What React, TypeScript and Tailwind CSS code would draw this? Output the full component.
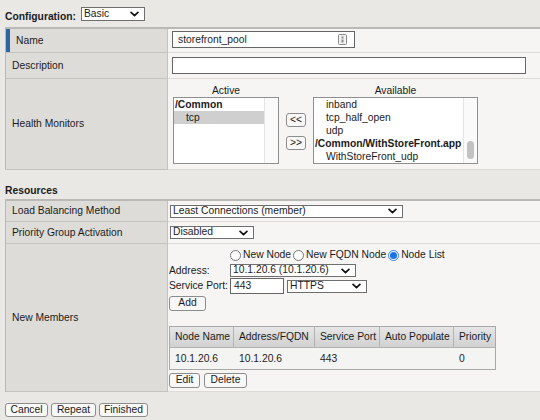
import React from "react";

const Chevron = () => (
  <svg viewBox="0 0 10 6" className="w-[9px] h-[6px] shrink-0">
    <path
      d="M1.2 1.2L5 4.8L8.8 1.2"
      fill="none"
      stroke="#111"
      strokeWidth="1.9"
      strokeLinecap="round"
      strokeLinejoin="round"
    />
  </svg>
);

const Select = ({ text, className }: { text: string; className: string }) => (
  <div
    className={`flex items-center justify-between bg-white border border-[#6f6f6f] pl-[2px] pr-[5px] leading-none ${className}`}
  >
    <span>{text}</span>
    <Chevron />
  </div>
);

const Btn = ({ label, className }: { label: string; className: string }) => (
  <button
    type="button"
    className={`flex items-center justify-center bg-[#f8f8f8] border border-[#8c8c8c] rounded-[3px] leading-none ${className}`}
  >
    {label}
  </button>
);

const Radio = ({ checked, label }: { checked?: boolean; label: string }) => (
  <label className="flex items-center">
    {checked ? (
      <span className="w-[11px] h-[11px] rounded-full border border-[#2f7df3] bg-white p-[1px]">
        <span className="block w-full h-full rounded-full bg-[#1a73e8]" />
      </span>
    ) : (
      <span className="w-[11px] h-[11px] rounded-full border border-[#767676] bg-white" />
    )}
    <span className="ml-[2px] mr-[2px]">{label}</span>
  </label>
);

const KeyIcon = () => (
  <svg viewBox="0 0 9 11" className="w-[9px] h-[11px]">
    <rect x="0.5" y="0.5" width="8" height="10" rx="1" fill="#f2f2f2" stroke="#8a8a8a" />
    <rect x="3.5" y="2.5" width="2" height="2" fill="#8a8a8a" />
    <rect x="3.5" y="5.5" width="2" height="3" fill="#8a8a8a" />
  </svg>
);

const label = "bg-[#dedcd8] border-r border-b border-[#c4c3bf] flex items-center";
const value = "bg-[#f6f5f3] border-b border-[#dcdbd8]";

const headCell =
  "h-full flex items-center pl-[5px] border-r border-[#b3b3b3] bg-linear-to-b from-[#e6e6e6] to-[#d1d1d1]";

export default function App() {
  return (
    <div className="w-[540px] h-[420px] overflow-hidden bg-[#e9e8e5] text-[10.3px] text-[#1b1b1b] font-['Liberation_Sans',Arial,Helvetica,sans-serif]">
      {/* top */}
      <div className="h-[27px] flex items-start pl-[5px] pt-[7px]">
        <span className="font-bold mt-[3px] leading-[13px]">Configuration:</span>
        <Select text="Basic" className="ml-[5px] w-[64px] h-[14px]" />
      </div>

      {/* general table */}
      <div className="ml-[5px] w-[535px] border-t-2 border-l border-[#bab9b5]">
        <div className="grid grid-cols-[162px_1fr] h-[24px]">
          <div className={label}>
            <div className="w-[4px] h-full bg-[#2e65a3]" />
            <span className="pl-[6px]">Name</span>
          </div>
          <div className={`${value} pl-[4px] pt-[2px]`}>
            <div className="w-[183px] h-[17px] border border-[#666] bg-white flex items-center justify-between pl-[5px] pr-[7px]">
              <span>storefront_pool</span>
              <KeyIcon />
            </div>
          </div>
        </div>
        <div className="grid grid-cols-[162px_1fr] h-[26px]">
          <div className={`${label} pl-[6px]`}>Description</div>
          <div className={`${value} pl-[4px] flex items-center`}>
            <div className="w-[354px] h-[17px] border border-[#666] bg-white" />
          </div>
        </div>
        <div className="grid grid-cols-[162px_1fr] h-[91px]">
          <div className={`${label} pl-[6px]`}>Health Monitors</div>
          <div className={`${value} flex pl-[5px] pt-[5px]`}>
            <div className="w-[106px] flex flex-col">
              <div className="h-[13px] leading-[13px] text-center">Active</div>
              <div className="h-[67px] border border-[#8f8f8f] bg-white flex">
                <div className="flex-1 flex flex-col">
                  <div className="h-[13px] leading-[13px] pl-[1px] font-bold">/Common</div>
                  <div className="h-[13px] leading-[13px] pl-[12px] bg-[#cfcfcf]">tcp</div>
                </div>
                <div className="w-[14px] border-l border-[#e4e4e4] bg-[#fafafa]" />
              </div>
            </div>
            <div className="w-[20px] ml-[7px] pt-[29px] flex flex-col gap-[9px]">
              <Btn label="<<" className="w-[20px] h-[14px]" />
              <Btn label=">>" className="w-[20px] h-[14px]" />
            </div>
            <div className="w-[165px] ml-[7px] flex flex-col">
              <div className="h-[13px] leading-[13px] text-center">Available</div>
              <div className="h-[67px] border border-[#8f8f8f] bg-white flex overflow-hidden">
                <div className="flex-1 flex flex-col whitespace-nowrap">
                  <div className="h-[13px] leading-[13px] pl-[12px]">inband</div>
                  <div className="h-[13px] leading-[13px] pl-[12px]">tcp_half_open</div>
                  <div className="h-[13px] leading-[13px] pl-[12px]">udp</div>
                  <div className="h-[13px] leading-[13px] pl-[1px] font-bold">/Common/WithStoreFront.app</div>
                  <div className="h-[13px] leading-[13px] pl-[12px]">WithStoreFront_udp</div>
                </div>
                <div className="w-[14px] border-l border-[#e4e4e4] bg-[#fafafa] pt-[43px] pl-[3px]">
                  <div className="w-[7px] h-[18px] rounded-full bg-[#c2c2c2]" />
                </div>
              </div>
            </div>
          </div>
        </div>
      </div>

      {/* resources */}
      <div className="h-[29px] pt-[14px] pl-[5px] font-bold leading-[13px]">Resources</div>

      <div className="ml-[5px] w-[535px] border-t-2 border-l border-[#bab9b5]">
        <div className="grid grid-cols-[162px_1fr] h-[21px]">
          <div className={`${label} pl-[6px]`}>Load Balancing Method</div>
          <div className={`${value} pl-[2px] flex items-center`}>
            <Select text="Least Connections (member)" className="w-[233px] h-[13px]" />
          </div>
        </div>
        <div className="grid grid-cols-[162px_1fr] h-[22px]">
          <div className={`${label} pl-[6px]`}>Priority Group Activation</div>
          <div className={`${value} pl-[2px] flex items-center`}>
            <Select text="Disabled" className="w-[84px] h-[13px]" />
          </div>
        </div>
        <div className="grid grid-cols-[162px_1fr] h-[148px]">
          <div className={`${label} pl-[6px]`}>New Members</div>
          <div className={`${value} pl-[1px] pt-[4px] flex flex-col items-start`}>
            <div className="h-[14px] flex items-center pl-[61px]">
              <Radio label="New Node" />
              <Radio label="New FQDN Node" />
              <Radio checked label="Node List" />
            </div>
            <div className="mt-[2px] h-[13px] flex items-center">
              <span className="w-[61px]">Address:</span>
              <Select text="10.1.20.6 (10.1.20.6)" className="w-[126px] h-[13px]" />
            </div>
            <div className="mt-[1px] h-[16px] flex items-center">
              <span className="w-[61px]">Service Port:</span>
              <div className="w-[54px] h-[16px] border border-[#666] bg-white flex items-center pl-[3px]">443</div>
              <Select text="HTTPS" className="ml-[3px] w-[80px] h-[13px]" />
            </div>
            <Btn label="Add" className="mt-[2px] w-[37px] h-[15px]" />
            <div className="mt-[15px] border border-[#a9a9a9] flex flex-col">
              <div className="h-[21px] grid grid-cols-[64px_81px_65px_74px_41px] border-b border-[#b3b3b3]">
                <div className={headCell}>Node Name</div>
                <div className={headCell}>Address/FQDN</div>
                <div className={headCell}>Service Port</div>
                <div className={headCell}>Auto Populate</div>
                <div className={`${headCell} border-r-0`}>Priority</div>
              </div>
              <div className="h-[21px] grid grid-cols-[64px_81px_65px_74px_41px] bg-[#f4f4f3] items-center">
                <div className="pl-[5px]">10.1.20.6</div>
                <div className="pl-[5px]">10.1.20.6</div>
                <div className="pl-[5px]">443</div>
                <div className="pl-[5px]"></div>
                <div className="pl-[5px]">0</div>
              </div>
            </div>
            <div className="mt-[3px] flex gap-[4px]">
              <Btn label="Edit" className="w-[31px] h-[15px]" />
              <Btn label="Delete" className="w-[43px] h-[15px]" />
            </div>
          </div>
        </div>
      </div>

      {/* bottom buttons */}
      <div className="pt-[11px] pl-[5px] flex gap-[3px]">
        <Btn label="Cancel" className="w-[43px] h-[14px]" />
        <Btn label="Repeat" className="w-[45px] h-[14px]" />
        <Btn label="Finished" className="w-[49px] h-[14px]" />
      </div>
    </div>
  );
}
